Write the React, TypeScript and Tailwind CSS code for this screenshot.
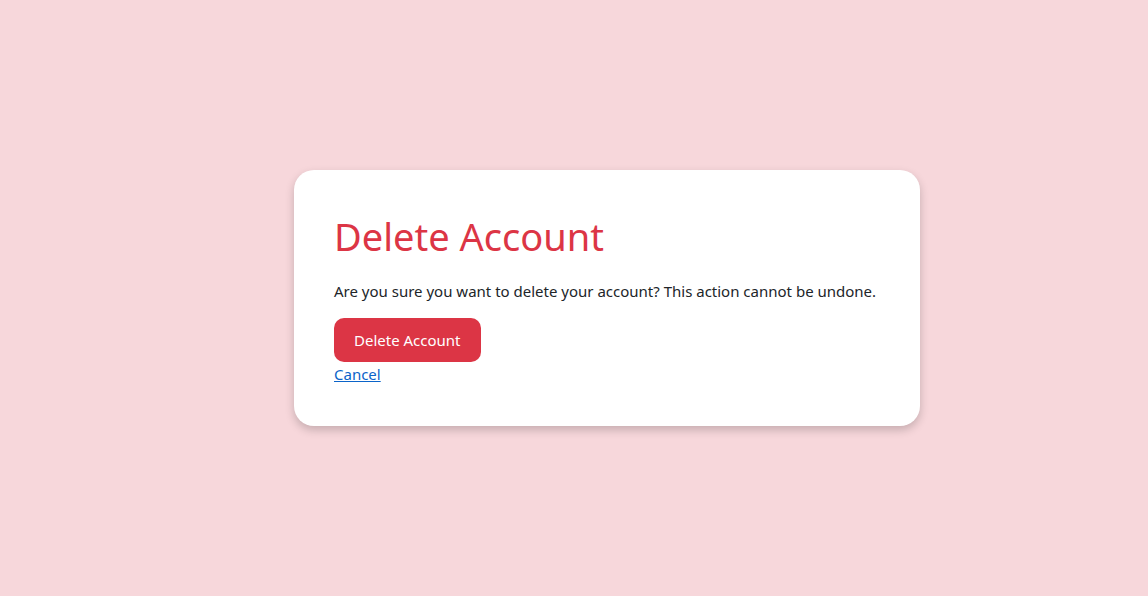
export default function App() {
  return (
    <div
      className="flex h-[596px] w-full items-center bg-[#f7d7db] pl-[294px]"
      style={{ fontFamily: '"Noto Sans", "Open Sans", sans-serif' }}
    >
      <div className="w-[626px] rounded-[20px] bg-white px-10 pt-11 pb-10 shadow-[0_4px_10px_rgba(0,0,0,0.2)]">
        <h1 className="text-[38px] leading-[1.2] font-normal text-[#dc3545]">Delete Account</h1>
        <p className="mt-5 text-[15px] leading-6 text-[#212529]">
          Are you sure you want to delete your account? This action cannot be undone.
        </p>
        <button className="mt-[15px] block h-11 rounded-[10px] bg-[#dc3545] px-5 text-[15px] text-white">
          Delete Account
        </button>
        <a href="#" className="block w-max text-[15px] leading-6 text-[#0b64c9] underline">
          Cancel
        </a>
      </div>
    </div>
  );
}
